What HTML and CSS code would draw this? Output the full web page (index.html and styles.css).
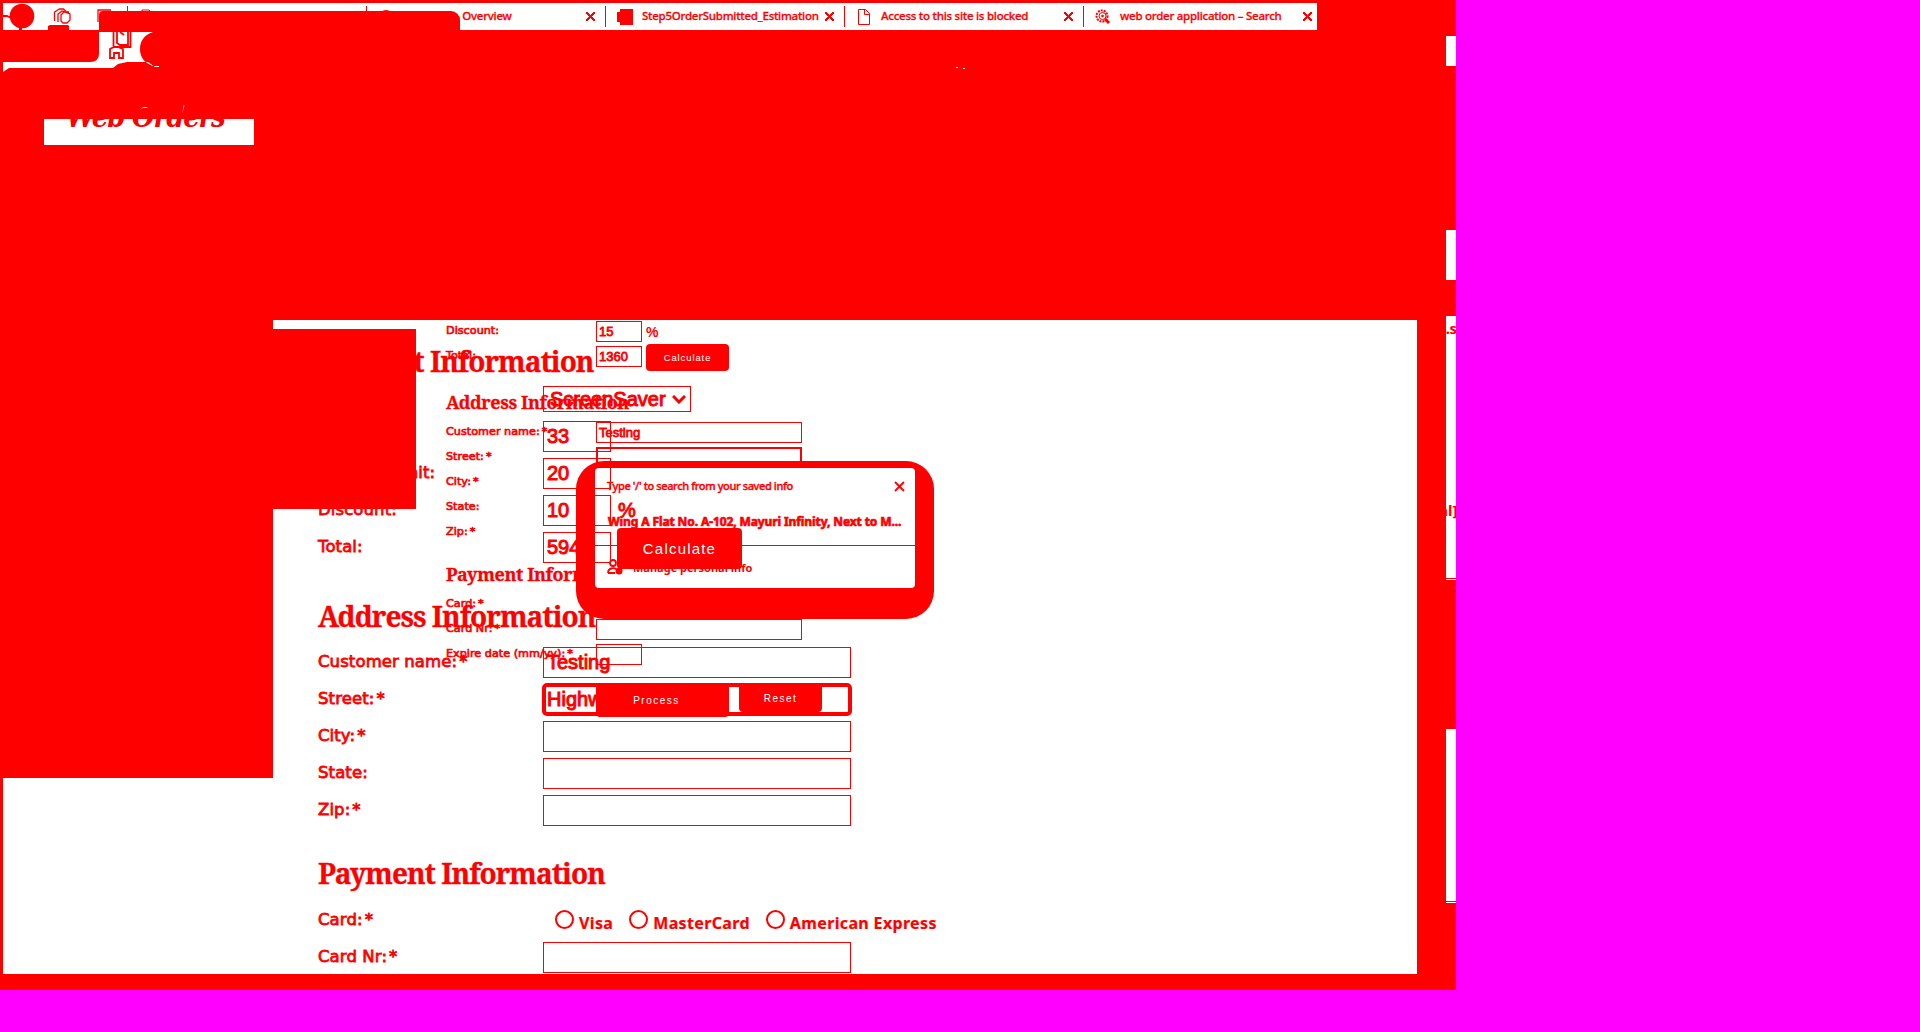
FILE: index.html
```html
<!DOCTYPE html>
<html lang="en">
<head>
<meta charset="utf-8">
<title>Web Orders</title>
<link rel="stylesheet" href="styles.css">
</head>
<body>
<div class="stage">
  <nav class="tabs">
    <div class="pins">
      <svg width="124" height="27" viewBox="3 3 124 27"><circle cx="22" cy="16" r="12.3"/><path d="M3 15h4l5 2v2L7 17H3zM19 26h3v4h-3zM48 30v-4l2-1h18l1 1v4z"/><path class="cube" d="M54.500 21v-9l5-3h4l4 4M58 22v-8l4-3 8 3v6l-3 3h-4l-2-2v-6l3-3h5M98 22V10h13"/></svg>
    </div>
    <div class="tab"><svg class="icon" viewBox="0 0 16 16"><path class="line" d="M3 1h7l4 4v10H3z"/></svg></div>
    <div class="tab"><svg class="icon" viewBox="0 0 16 16"><circle cx="8" cy="8" r="7"/></svg><span class="title over">– Overview</span><b class="x"></b></div>
    <div class="tab"><svg class="icon" viewBox="0 0 16 16"><path d="M3 0h13v16H3v-3H0V3h3z"/></svg><span class="title">Step5OrderSubmitted_Estimation</span><b class="x"></b></div>
    <div class="tab"><svg class="icon" viewBox="0 0 16 16"><path class="line" d="M2.500.5h7l4 4v11h-11zM8.500.5v5h5"/></svg><span class="title">Access to this site is blocked</span><b class="x"></b></div>
    <div class="tab"><svg class="icon" viewBox="0 0 16 16"><circle class="ring" cx="7" cy="7" r="5.500"/><circle class="line" cx="7.500" cy="7" r="3.500"/><circle cx="7.500" cy="7" r="1.300"/><path class="thick" d="M10 10l4 4"/></svg><span class="title">web order application – Search</span><b class="x"></b></div>
  </nav>
  <svg class="toolbar" width="1456" height="290" viewBox="0 30 1456 290">
    <path class="w" d="M99 32h54c-9 3-13 9-13 17 0 9 5 14 13 17h6v1h-4l-7-5h-21l-9 2-5 4H9l-6 4V62h88q8-1 8-8z"/>
    <path class="line2" d="M113.500 32v15h17V32M117 32v11l3 2h8V32M120 32l4 3M110 58v-9l4-2h4l5 2v9h-4v-5h-5v5z"/>
    <path class="w" d="M44 119h210v26H44zM956 67h2v1h-2zM963 68h2v1h-2z"/>
    <path class="wline" d="M137 112l3-3 3-1.500h5l4 5M179 105.500h5l-2 7M114 105.500h1"/>
  </svg>
  <div class="brand">Web Orders</div>
  <div class="tabcard"></div>
  <main class="main"><aside class="side"></aside><section class="page">
    <form class="form big">
      <h2 class="h-product">Product Information</h2>
      <div class="row"><label></label><span class="field pick">ScreenSaver<svg width="14" height="9" viewBox="0 0 14 9"><path d="M1 1l6 6 6-6"/></svg></span></div>
      <div class="row"><label></label><span class="field short">33</span></div>
      <div class="row"><label>Price per unit:</label><span class="field short">20</span></div>
      <div class="row"><label>Discount:</label><span class="field short">10</span><span class="pct">%</span></div>
      <div class="row"><label>Total:</label><span class="field short">594</span><span class="btn calc">Calculate</span></div>
      <h2 class="h-address">Address Information</h2>
      <div class="row"><label>Customer name:<em>*</em></label><span class="field">Testing</span></div>
      <div class="row"><label>Street:<em>*</em></label><span class="field focus">Highw</span></div>
      <div class="row"><label>City:<em>*</em></label><span class="field"></span></div>
      <div class="row"><label>State:</label><span class="field"></span></div>
      <div class="row"><label>Zip:<em>*</em></label><span class="field"></span></div>
      <h2 class="h-payment">Payment Information</h2>
      <div class="row"><label>Card:<em>*</em></label><span class="cards"><i></i><span class="visa">Visa</span><i></i><span class="master">MasterCard</span><i></i><span class="amex">American Express</span></span></div>
      <div class="row"><label>Card Nr:<em>*</em></label><span class="field"></span></div>
    </form>
  </section></main>
  <div class="shade"></div>
  <form class="form small">
    <div class="row"><label>Discount:</label><span class="field short">15</span><span class="pct">%</span></div>
    <div class="row"><label>Total:</label><span class="field short">1360</span><span class="btn calc">Calculate</span></div>
    <h2 class="h-address">Address Information</h2>
    <div class="row"><label>Customer name:<em>*</em></label><span class="field">Testing</span></div>
    <div class="row"><label>Street:<em>*</em></label><span class="field focus"></span></div>
    <div class="row"><label>City:<em>*</em></label></div>
    <div class="row"><label>State:</label></div>
    <div class="row"><label>Zip:<em>*</em></label></div>
    <h2 class="h-payment">Payment Information</h2>
    <div class="row"><label>Card:<em>*</em></label></div>
    <div class="row"><label>Card Nr:<em>*</em></label><span class="field"></span></div>
    <div class="row"><label>Expire date (mm/yy):<em>*</em></label><span class="field short"></span></div>
    <div class="actions"><span class="btn process">Process</span><span class="btn reset">Reset</span></div>
  </form>
  <div class="popup"><div class="panel">
    <div class="hint"><span>Type '/' to search from your saved info</span><svg width="11" height="11" viewBox="0 0 11 11"><path class="line2" d="M1 1l9 9M10 1l-9 9"/></svg></div>
    <div class="suggest">Wing A Flat No. A-102, Mayuri Infinity, Next to M...</div>
    <div class="manage"><svg width="16" height="16" viewBox="0 0 16 16"><circle class="line2" cx="6" cy="4" r="3"/><path class="line2" d="M1 14c0-6 9-6 9-2M1 14h7"/><circle cx="12" cy="12" r="3.500"/></svg><span>Manage personal info</span></div>
  </div></div>
  <div class="edge"><div class="e1"></div><div class="e2"></div><div class="e3"><span class="s1">..s</span><span class="s2">al]</span></div><div class="e4"></div></div>
</div>
</body>
</html>
```
FILE: styles.css
```css
* { box-sizing: border-box; }
body { margin: 0; background: #f0f; color: #f00; overflow: hidden; font-family: "Noto Sans", sans-serif; }
svg { display: block; fill: #f00; flex: none; }
em { font-style: normal; margin-left: 2px; }
.line, .line2, .thick, .ring, .cube { fill: none; stroke: #f00; }
.cube { stroke-width: 1.3; }
.line2 { stroke-width: 1.8; }
.thick { stroke-width: 3; }
.ring { stroke-width: 2; stroke-dasharray: 2 1; }
.w { fill: #fff; }
.wline { fill: none; stroke: #fff; }
.stage { position: relative; width: 1456px; height: 990px; background: #f00; overflow: hidden; padding-top: 3px; }
.tabs { display: flex; width: 1314px; height: 27px; margin-left: 3px; background: #fff; }
.pins { flex: none; width: 124px; }
.tab { display: flex; flex: none; align-items: center; width: 239px; height: 21px; margin-top: 3px; padding-left: 11px; border-left: 1px solid #f00; font: 500 11.5px/20px "Noto Sans", sans-serif; -webkit-text-stroke: .3px #f00; white-space: nowrap; }
.tab:last-child { width: 234px; }
.tab .icon { width: 16px; height: 16px; }
.title { flex: none; width: 178px; margin-left: 9px; padding-bottom: 2px; letter-spacing: -.25px; }
.over { padding-left: 51px; }
.x { flex: none; width: 9px; height: 9px; margin-left: 5px; background: linear-gradient(45deg, transparent 42%, #f00 42%, #f00 58%, transparent 58%), linear-gradient(-45deg, transparent 42%, #f00 42%, #f00 58%, transparent 58%); }
.tabcard { position: absolute; left: 99px; top: 11px; width: 361px; height: 21px; background: #f00; border-radius: 4px 9px 0 0; }
.brand { position: absolute; left: 66px; top: 98px; font: italic bold 29px/38px "DejaVu Serif Condensed", "DejaVu Serif", serif; font-stretch: condensed; white-space: nowrap; letter-spacing: -1.2px; }
.main { display: flex; width: 1414px; height: 654px; margin-left: 3px; background: #fff; }
.side { width: 270px; height: 458px; background: #f00; }
.page { flex: 1; }
.shade { position: absolute; left: 273px; top: 329px; width: 143px; height: 180px; background: #f00; }
.form { display: flex; flex-direction: column; white-space: nowrap; }
.form h2 { margin: 0; font-family: "Noto Serif", "Liberation Serif", serif; font-weight: bold; }
.row { display: flex; flex: none; align-items: center; }
.field { display: flex; align-items: center; border: 1px solid #f00; font-family: "Liberation Sans", sans-serif; -webkit-text-stroke: 1px #f00; }
.btn { display: flex; align-items: center; justify-content: center; background: #f00; color: #fff; border-radius: 4px; }
.big { position: relative; z-index: 3; padding-left: 45px; }
.big .row { height: 37px; }
.big label { width: 225px; font: 500 16.5px/24px "DejaVu Sans", sans-serif; letter-spacing: .1px; -webkit-text-stroke: .8px #f00; padding-bottom: 2px; }
.big h2 { font-size: 28px; line-height: 40px; letter-spacing: -1px; -webkit-text-stroke: .3px #f00; }
.big .h-product { height: 61px; padding-top: 21px; }
.big .h-address { height: 78px; padding-top: 30px; }
.big .h-payment { height: 73px; padding-top: 24px; }
.big .field { width: 308px; height: 31px; padding-left: 3px; font-size: 20px; }
.big .short { width: 68px; }
.big .pick { width: 148px; height: 26px; padding-left: 6px; gap: 6px; margin-bottom: 1px; }
.pick path { fill: none; stroke: #f00; stroke-width: 3; }
.big .pct { margin-left: 7px; font: 20px "Liberation Sans", sans-serif; -webkit-text-stroke: .9px #f00; }
.big .calc { width: 125px; height: 41px; margin: 2px 0 0 6px; font: 15px "Liberation Sans", sans-serif; letter-spacing: 1.2px; }
.big .focus { width: 310px; height: 33px; margin-left: -1px; border-width: 4px; border-radius: 5px; padding-left: 1px; }
.cards { display: flex; align-items: center; padding-left: 12px; margin-top: -3px; font: bold 16px/20px "Noto Sans", sans-serif; letter-spacing: .35px; -webkit-text-stroke: .2px #f00; }
.cards i { width: 19px; height: 19px; border: 2.500px solid #f00; border-radius: 50%; margin-right: 5px; }
.cards span { padding-top: 7px; margin-right: 16px; }
.small { position: absolute; z-index: 1; left: 446px; top: 319px; width: 410px; }
.small .row { height: 25px; }
.small label { width: 150px; font: 500 11.2px/16px "DejaVu Sans", sans-serif; letter-spacing: .02px; -webkit-text-stroke: .7px #f00; padding-bottom: 2px; }
.small h2 { font-size: 18px; line-height: 26px; letter-spacing: -.4px; -webkit-text-stroke: .3px #f00; }
.small .h-address { height: 51px; padding-top: 20px; }
.small .h-payment { height: 47px; padding-top: 16px; }
.small .field { width: 206px; height: 21px; padding-left: 2px; font-size: 13px; -webkit-text-stroke: .8px #f00; }
.small .short { width: 46px; }
.small .pct { margin-left: 4px; font: bold 14px "Liberation Sans", sans-serif; }
.small .calc { width: 83px; height: 27px; margin: 2px 0 0 4px; font: 9.5px "Liberation Sans", sans-serif; letter-spacing: .9px; }
.small .focus { border-width: 2px; }
.actions { display: flex; gap: 10px; padding: 17px 0 0 150px; font: 10px "Liberation Sans", sans-serif; letter-spacing: 1.5px; }
.process { width: 133px; height: 33px; padding-right: 12px; }
.reset { width: 83px; height: 28px; }
.popup { position: absolute; z-index: 2; left: 576px; top: 461px; width: 358px; height: 158px; background: #f00; border-radius: 28px; padding: 7px 19px 31px; }
.panel { height: 120px; background: #fff; border-radius: 4px; white-space: nowrap; overflow: hidden; }
.hint { display: flex; align-items: center; justify-content: space-between; height: 36px; padding: 0 10px 0 12px; font: 500 11px/16px "Noto Sans", sans-serif; letter-spacing: -.38px; -webkit-text-stroke: .4px #f00; }
.suggest { height: 42px; border-bottom: 1px solid #f00; padding: 9px 0 0 13px; font: bold 12px/18px "Noto Sans", sans-serif; letter-spacing: -.1px; -webkit-text-stroke: .7px #f00; }
.manage { display: flex; align-items: center; gap: 10px; height: 42px; padding-left: 12px; font: bold 11px "Noto Sans", sans-serif; }
.edge { position: absolute; right: 0; top: 36px; width: 10px; display: flex; flex-direction: column; }
.edge > div { background: #fff; }
.e1 { height: 30px; }
.e2 { height: 50px; margin-top: 164px; }
.e3 { height: 264px; margin-top: 36px; padding-top: 2px; border-bottom: 1px solid #fff; box-shadow: inset 0 -1px #f00; display: flex; flex-direction: column; overflow: hidden; font: bold 15px/20px "Noto Sans", sans-serif; }
.s1 { margin-left: -4px; letter-spacing: -.5px; }
.s2 { margin: 162px 0 0 -7px; }
.e4 { height: 174px; margin-top: 149px; border-bottom: 1px solid #fff; box-shadow: inset 0 -1px #f00; }
```
